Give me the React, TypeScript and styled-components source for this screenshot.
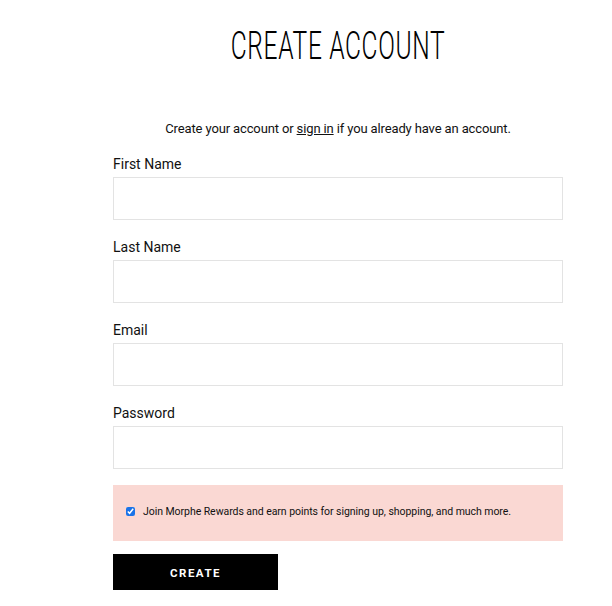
import React from "react";
import styled, { createGlobalStyle } from "styled-components";

const Global = createGlobalStyle`
  html, body { margin: 0; padding: 0; background: #fff; }
  body { font-family: Roboto, "Noto Sans", Arial, sans-serif; color: #111; }
  * { box-sizing: border-box; }
`;

const Page = styled.main`
  width: 612px;
  padding: 24px 0 0 113px;
`;

const Form = styled.form`
  width: 450px;
  display: flex;
  flex-direction: column;
`;

const Title = styled.h1`
  margin: 0;
  text-align: center;
  font-family: Roboto, "DejaVu Sans", sans-serif;
  font-weight: 300;
  font-size: 39px;
  line-height: 44px;
  letter-spacing: 1px;
  color: #000;
  transform: scaleX(0.63);
`;

const Intro = styled.p`
  margin: 52px 0 16px;
  text-align: center;
  font-size: 13px;
  line-height: 18px;
  letter-spacing: -0.13px;
  color: #111;
`;

const Link = styled.a`
  color: #111;
  text-decoration: underline;
`;

const Field = styled.label`
  display: flex;
  flex-direction: column;
  gap: 3px;
  margin-bottom: 17px;
`;

const LabelText = styled.span`
  font-size: 14px;
  line-height: 20px;
  color: #111;
`;

const Input = styled.input`
  height: 43px;
  width: 100%;
  border: 1px solid #e3e3e3;
  background: #fff;
  padding: 0 12px;
  font: inherit;
  outline: none;
`;

const Rewards = styled.div`
  background: #fad8d3;
  height: 56px;
  padding: 0 13px 4px;
  display: flex;
  align-items: center;
  gap: 8px;
  margin-top: -1px;
  margin-bottom: 13px;
`;

const Check = styled.input`
  margin: 0;
  width: 9px;
  height: 9px;
  accent-color: #1a73e8;
`;

const RewardsText = styled.span`
  font-size: 10.5px;
  letter-spacing: -0.05px;
  color: #111;
`;

const Button = styled.button`
  width: 165px;
  height: 36px;
  background: #000;
  color: #fff;
  border: none;
  font-family: Roboto, Arial, sans-serif;
  font-weight: 700;
  font-size: 11.5px;
  letter-spacing: 1.5px;
  padding: 2px 0 0;
  cursor: pointer;
`;

export default function App() {
  return (
    <>
      <Global />
      <Page>
        <Form onSubmit={(e) => e.preventDefault()}>
          <Title>CREATE ACCOUNT</Title>
          <Intro>
            Create your account or <Link href="#">sign in</Link> if you already have an account.
          </Intro>
          <Field>
            <LabelText>First Name</LabelText>
            <Input type="text" />
          </Field>
          <Field>
            <LabelText>Last Name</LabelText>
            <Input type="text" />
          </Field>
          <Field>
            <LabelText>Email</LabelText>
            <Input type="email" />
          </Field>
          <Field>
            <LabelText>Password</LabelText>
            <Input type="password" />
          </Field>
          <Rewards>
            <Check type="checkbox" defaultChecked />
            <RewardsText>Join Morphe Rewards and earn points for signing up, shopping, and much more.</RewardsText>
          </Rewards>
          <Button type="submit">CREATE</Button>
        </Form>
      </Page>
    </>
  );
}
